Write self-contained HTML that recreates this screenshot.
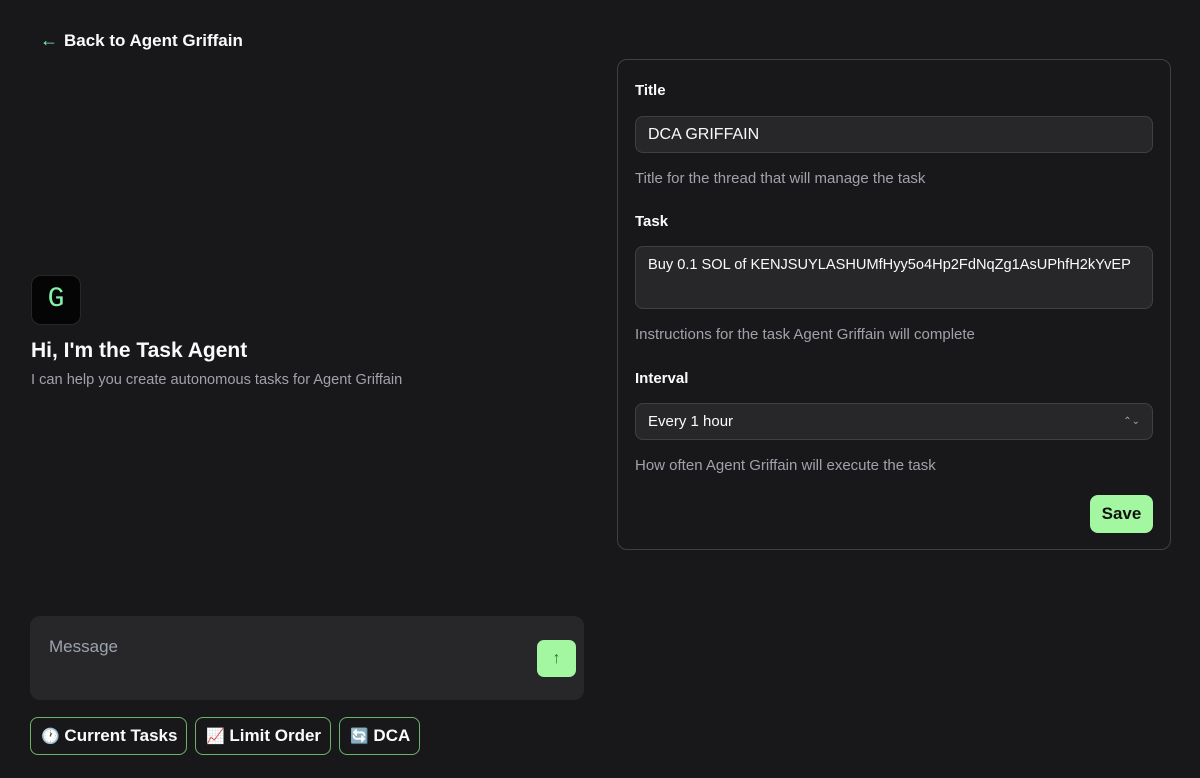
<!DOCTYPE html>
<html><head><meta charset="utf-8"><style>
*{box-sizing:border-box;margin:0;padding:0}
body{width:1200px;height:778px;background:#18181b;color:#fafafa;font-family:"Liberation Sans",sans-serif;position:relative;overflow:hidden}
.a{position:absolute;white-space:nowrap}
.lbl{font-size:15px;font-weight:bold;color:#fafafa}
.hint{font-size:15px;color:#a1a1aa}
.inp{background:#27272a;border:1px solid #3f3f46;border-radius:8px;font-size:16px;color:#fafafa;padding-left:12px}
.chip{position:absolute;top:717px;height:38px;border:1px solid #6ab46a;border-radius:8px;font-size:17px;font-weight:bold;line-height:36px;padding-left:10px;color:#fafafa;white-space:nowrap;overflow:hidden}
.e{font-size:15px}
</style></head><body>
<div class="a" style="left:40px;top:30px;font-size:17px;font-weight:bold"><span style="color:#86efac;margin-right:6px;font-size:18px">←</span>Back to Agent Griffain</div>

<div class="a" style="left:31px;top:275px;width:50px;height:50px;background:#050505;border:1px solid #27272a;border-radius:10px;color:#86efac;font-family:'Liberation Mono',monospace;font-size:28px;text-align:center;line-height:48px">G</div>
<div class="a" style="left:31px;top:339px;font-size:21px;font-weight:bold">Hi, I'm the Task Agent</div>
<div class="a" style="left:31px;top:372px;font-size:14.6px;color:#a1a1aa">I can help you create autonomous tasks for Agent Griffain</div>

<div class="a" style="left:30px;top:616px;width:554px;height:84px;background:#27272a;border-radius:10px"></div>
<div class="a" style="left:49px;top:637px;font-size:17px;color:#9ca3af">Message</div>
<div class="a" style="left:537px;top:640px;width:39px;height:37px;background:#a3f7a0;border-radius:7px;color:#15803d;text-align:center;line-height:37px;font-size:16px">↑</div>

<div class="chip" style="left:30px;width:157px"><span class="e">🕐</span> Current Tasks</div>
<div class="chip" style="left:195px;width:136px"><span class="e">📈</span> Limit Order</div>
<div class="chip" style="left:339px;width:81px"><span class="e">🔄</span> DCA</div>

<div class="a" style="left:617px;top:59px;width:554px;height:491px;border:1px solid #3f3f46;border-radius:10px"></div>
<div class="a lbl" style="left:635px;top:82px">Title</div>
<div class="a inp" style="left:635px;top:116px;width:518px;height:37px;line-height:35px">DCA GRIFFAIN</div>
<div class="a hint" style="left:635px;top:170px">Title for the thread that will manage the task</div>
<div class="a lbl" style="left:635px;top:213px">Task</div>
<div class="a inp" style="left:635px;top:246px;width:518px;height:63px;padding-top:10px;font-size:14.6px">Buy 0.1 SOL of KENJSUYLASHUMfHyy5o4Hp2FdNqZg1AsUPhfH2kYvEP</div>
<div class="a hint" style="left:635px;top:326px">Instructions for the task Agent Griffain will complete</div>
<div class="a lbl" style="left:635px;top:370px">Interval</div>
<div class="a inp" style="left:635px;top:403px;width:518px;height:37px;line-height:35px;font-size:15px">Every 1 hour<span style="position:absolute;right:12px;top:0;font-size:10px;color:#a1a1aa">⌃⌄</span></div>
<div class="a hint" style="left:635px;top:457px">How often Agent Griffain will execute the task</div>
<div class="a" style="left:1090px;top:495px;width:63px;height:38px;background:#a3f7a0;border-radius:8px;color:#111;font-weight:bold;font-size:17px;text-align:center;line-height:38px">Save</div>
</body></html>
